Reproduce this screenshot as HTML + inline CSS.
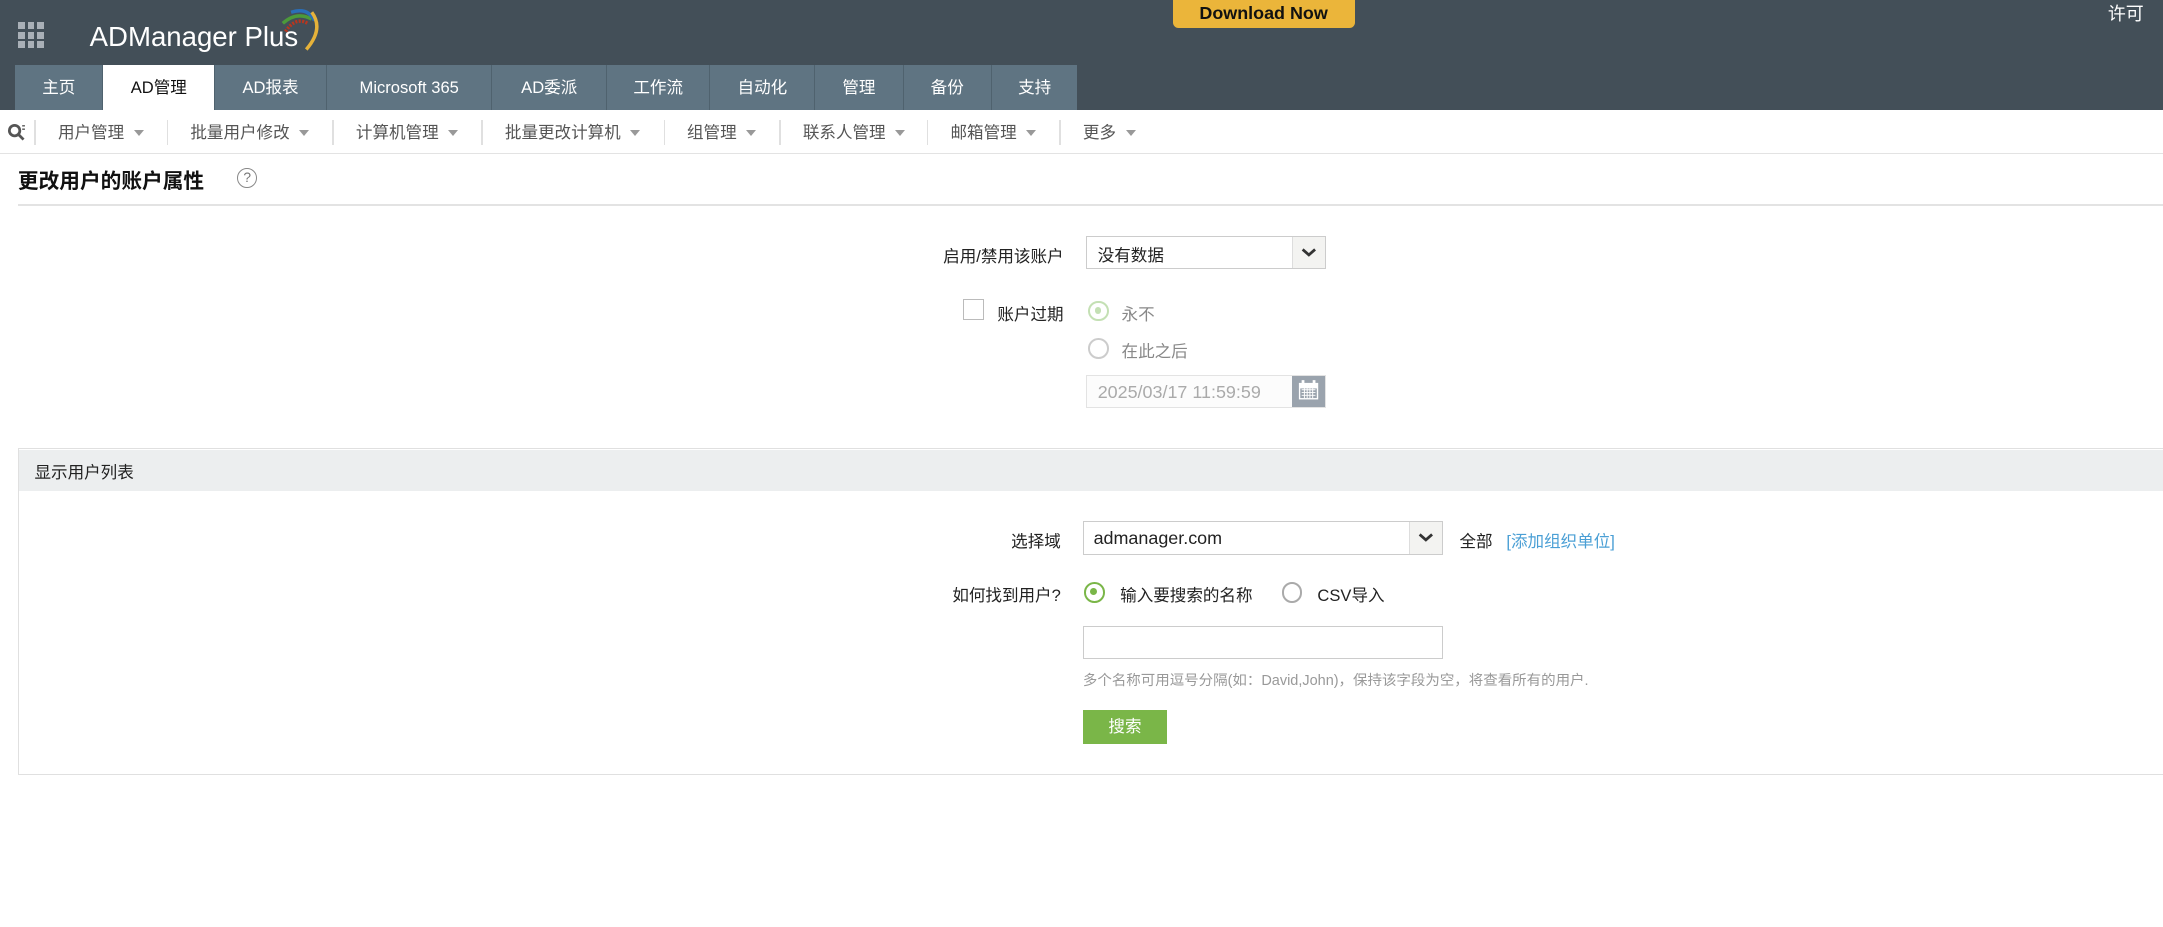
<!DOCTYPE html>
<html><head><meta charset="utf-8">
<style>
html,body{margin:0;padding:0;background:#fff;overflow:hidden;}
body{width:2163px;height:927px;}
#w{zoom:1.3795;width:1568px;height:672px;position:relative;font-family:"Liberation Sans","Noto Sans CJK SC",sans-serif;font-size:12px;color:#222;}
.a{position:absolute;}
.hdr{left:0;top:0;width:1568px;height:80px;background:#434f58;}
.grid span{position:absolute;width:5px;height:5px;background:#a9b0b7;}
.tab{position:absolute;top:47px;height:33px;line-height:33px;text-align:center;color:#fff;background:#5f7482;border-right:1px solid #4f626e;box-sizing:border-box;font-size:12px;}
.tab.act{background:#fff;color:#111;}
.sub{top:80px;left:0;width:1568px;height:31px;border-bottom:1px solid #e3e3e3;}
.si{position:absolute;top:0;height:31px;line-height:31px;color:#555;font-size:12px;}
.si:after{content:"";display:inline-block;margin-left:7px;border-left:4px solid transparent;border-right:4px solid transparent;border-top:5px solid #999;vertical-align:middle;}
.sep{position:absolute;top:7px;width:1px;height:18px;background:#e0e0e0;}
.lbl{position:absolute;text-align:right;}
.sel{position:absolute;border:1px solid #ccc;box-sizing:border-box;background:#fff;}
.arr{position:absolute;right:0;top:0;bottom:0;width:23px;background:#f3f3f1;border-left:1px solid #ddd;}
.rad{position:absolute;width:15px;height:15px;border-radius:50%;box-sizing:border-box;}
</style></head><body><div id="w">
<div class="a hdr"></div>
<div class="a grid" style="left:13px;top:16px;width:20px;height:20px;">
<span style="left:0;top:0"></span><span style="left:7px;top:0"></span><span style="left:14px;top:0"></span>
<span style="left:0;top:7px"></span><span style="left:7px;top:7px"></span><span style="left:14px;top:7px"></span>
<span style="left:0;top:14px"></span><span style="left:7px;top:14px"></span><span style="left:14px;top:14px"></span></div>
<div class="a" style="left:65px;top:15px;color:#fff;font-size:20px;">ADManager Plus</div>
<svg class="a" style="left:195px;top:3px" width="40" height="36" viewBox="0 0 40 36">
<path d="M12 20 Q19 9 28 14" stroke="#b8361f" stroke-width="2.5" fill="none" stroke-dasharray="1.5 1"/>
<path d="M10 14 Q20 5 31 11" stroke="#4c9a3a" stroke-width="2.5" fill="none"/>
<path d="M16 6 Q28 2 33 12" stroke="#2a6eb8" stroke-width="2.5" fill="none"/>
<path d="M31 6 Q40 18 27 33" stroke="#e6b23a" stroke-width="2.5" fill="none"/>
</svg>
<div class="a" style="left:850px;top:0;width:132px;height:20px;background:#ebb53a;border-radius:0 0 4px 4px;text-align:center;line-height:20px;font-weight:bold;font-size:13px;color:#111;">Download Now</div>
<div class="a" style="left:1528px;top:0;color:#fff;font-size:13px;">许可</div>
<div class="tab" style="left:11px;width:64px">主页</div>
<div class="tab act" style="left:75px;width:81px">AD管理</div>
<div class="tab" style="left:156px;width:81px">AD报表</div>
<div class="tab" style="left:237px;width:120px">Microsoft 365</div>
<div class="tab" style="left:357px;width:83px">AD委派</div>
<div class="tab" style="left:440px;width:75px">工作流</div>
<div class="tab" style="left:515px;width:76px">自动化</div>
<div class="tab" style="left:591px;width:64px">管理</div>
<div class="tab" style="left:655px;width:64px">备份</div>
<div class="tab" style="left:719px;width:62px;border-right:none">支持</div>
<div class="a sub"></div>
<svg class="a" style="left:5px;top:89px" width="14" height="13" viewBox="0 0 14 13"><circle cx="5.5" cy="5.5" r="3.8" stroke="#555" stroke-width="2" fill="none"/><path d="M8.5 8.5 L12 12" stroke="#555" stroke-width="2"/><path d="M11 2 h2 M11 4.5 h2" stroke="#555" stroke-width="1"/></svg>
<div class="sep" style="left:25px;top:87px"></div>
<div class="si" style="left:42px;top:81px">用户管理</div>
<div class="sep" style="left:121px;top:87px"></div>
<div class="si" style="left:138px;top:81px">批量用户修改</div>
<div class="sep" style="left:241px;top:87px"></div>
<div class="si" style="left:258px;top:81px">计算机管理</div>
<div class="sep" style="left:349px;top:87px"></div>
<div class="si" style="left:366px;top:81px">批量更改计算机</div>
<div class="sep" style="left:481px;top:87px"></div>
<div class="si" style="left:498px;top:81px">组管理</div>
<div class="sep" style="left:565px;top:87px"></div>
<div class="si" style="left:582px;top:81px">联系人管理</div>
<div class="sep" style="left:672px;top:87px"></div>
<div class="si" style="left:689px;top:81px">邮箱管理</div>
<div class="sep" style="left:768px;top:87px"></div>
<div class="si" style="left:785px;top:81px">更多</div>
<div class="a" style="left:13px;top:119px;font-weight:bold;font-size:15px;color:#111;">更改用户的账户属性</div>
<div class="a" style="left:172px;top:122px;width:13px;height:13px;border:1px solid #888;border-radius:50%;text-align:center;line-height:13px;font-size:10px;color:#777;">?</div>
<div class="a" style="left:13px;top:148px;width:1555px;height:1px;background:#e3e3e3"></div>
<div class="lbl" style="left:600px;width:171px;top:176px;">启用/禁用该账户</div>
<div class="sel" style="left:787px;top:171px;width:174px;height:24px;"><span class="a" style="left:8px;top:4px">没有数据</span><div class="arr"><svg width="23" height="22" viewBox="0 0 23 22"><path d="M7 9 L11.5 13 L16 9" stroke="#333" stroke-width="2" fill="none"/></svg></div></div>
<div class="a" style="left:698px;top:217px;width:15px;height:15px;border:1px solid #bbb;box-sizing:border-box;"></div>
<div class="a" style="left:723px;top:218px;">账户过期</div>
<div class="rad" style="left:789px;top:218px;border:2px solid #c4e0b4;"><div class="a" style="left:3px;top:3px;width:5px;height:5px;border-radius:50%;background:#c4e0b4"></div></div>
<div class="a" style="left:813px;top:218px;color:#888">永不</div>
<div class="rad" style="left:789px;top:245px;border:2px solid #ccc;"></div>
<div class="a" style="left:813px;top:245px;color:#888">在此之后</div>
<div class="sel" style="left:787px;top:272px;width:174px;height:24px;border-color:#e3e3e3;background:#fcfcfc"><span class="a" style="left:8px;top:4px;color:#aaa;font-size:13px">2025/03/17 11:59:59</span><div class="arr" style="background:#9aa3ad;border:none;width:24px;"><svg width="24" height="22" viewBox="0 0 24 22"><rect x="5" y="5" width="14" height="12" fill="#fff"/><rect x="6" y="9" width="12" height="7" fill="#9aa3ad"/><path d="M7 10h10M7 12h10M7 14h10M9 9v7M11 9v7M13 9v7M15 9v7" stroke="#fff" stroke-width=".7"/><rect x="7" y="3" width="2" height="4" fill="#fff"/><rect x="15" y="3" width="2" height="4" fill="#fff"/></svg></div></div>
<div class="a" style="left:13px;top:325px;width:1555px;height:237px;border:1px solid #e0e0e0;box-sizing:border-box;border-right:none;"></div>
<div class="a" style="left:14px;top:326px;width:1554px;height:30px;background:#eceeef;"></div>
<div class="a" style="left:25px;top:333px;font-size:12px;color:#222">显示用户列表</div>
<div class="lbl" style="left:600px;width:169px;top:383px;">选择域</div>
<div class="sel" style="left:785px;top:378px;width:261px;height:24px;"><span class="a" style="left:7px;top:4px;font-size:13px">admanager.com</span><div class="arr"><svg width="23" height="22" viewBox="0 0 23 22"><path d="M7 9 L11.5 13 L16 9" stroke="#333" stroke-width="2" fill="none"/></svg></div></div>
<div class="a" style="left:1058px;top:383px;">全部</div>
<div class="a" style="left:1092px;top:383px;color:#4a9fd5">[添加组织单位]</div>
<div class="lbl" style="left:600px;width:169px;top:422px;">如何找到用户?</div>
<div class="rad" style="left:786px;top:422px;border:2px solid #7ab648;"><div class="a" style="left:3px;top:3px;width:5px;height:5px;border-radius:50%;background:#7ab648"></div></div>
<div class="a" style="left:812px;top:422px;">输入要搜索的名称</div>
<div class="rad" style="left:929px;top:422px;border:2px solid #aaa;"></div>
<div class="a" style="left:955px;top:422px;">CSV导入</div>
<div class="sel" style="left:785px;top:454px;width:261px;height:24px;"></div>
<div class="a" style="left:785px;top:485px;font-size:10.5px;color:#999">多个名称可用逗号分隔(如：David,John)，保持该字段为空，将查看所有的用户.</div>
<div class="a" style="left:785px;top:515px;width:61px;height:24px;background:#7ab648;color:#fff;text-align:center;line-height:24px;">搜索</div>
</div></body></html>
